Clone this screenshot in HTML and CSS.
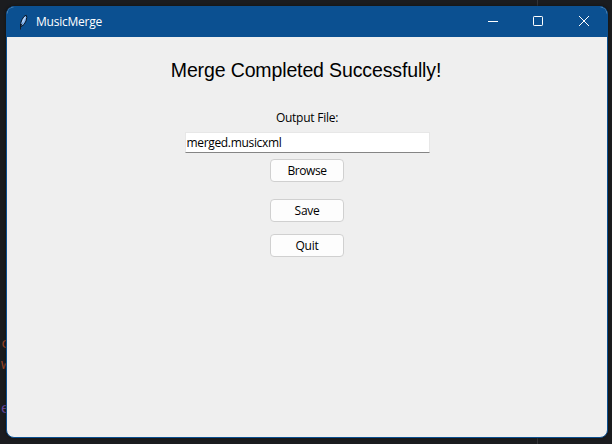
FILE: index.html
```html
<!DOCTYPE html>
<html lang="en">
<head>
<meta charset="utf-8">
<title>MusicMerge</title>
<link rel="stylesheet" href="styles.css">
</head>
<body>
<div class="desktop">
  <div class="guide"></div>
  <div class="code code-c">c</div>
  <div class="code code-w">w</div>
  <div class="code code-e">e</div>
  <main class="window">
    <header class="titlebar">
      <svg class="feather" width="12" height="16" viewBox="0 0 12 16">
        <path d="M2.5 13V9.5L4 5.5 6 2.5 8.2 1.2 8.8 3.3 8 7 6 10.5 4 12Z" fill="#86b6ef" stroke="#081524" stroke-width="1"/>
        <path d="M2.5 15.5V13L4 9.5" fill="none" stroke="#101c2c"/>
        <path d="M4.5 8 7 3" fill="none" stroke="#d5e8ff" stroke-width=".8"/>
      </svg>
      <span class="title">MusicMerge</span>
      <div class="controls">
        <svg width="46" height="30" viewBox="0 0 46 30"><path d="M17 14.5H27"/></svg>
        <svg width="46" height="30" viewBox="0 0 46 30"><rect x="16.5" y="9.5" width="9" height="9" rx=".7"/></svg>
        <svg width="46" height="30" viewBox="0 0 46 30"><path d="M16 9 26 19M26 9 16 19"/></svg>
      </div>
    </header>
    <section class="content">
      <h1><span>Merge Completed Successfully!</span></h1>
      <label for="output">Output File:</label>
      <input id="output" type="text" value="merged.musicxml">
      <button class="browse">Browse</button>
      <button class="save">Save</button>
      <button class="quit">Quit</button>
    </section>
  </main>
</div>
</body>
</html>
```
FILE: styles.css
```css
* { box-sizing: border-box; }
body { margin: 0; overflow: hidden; font-family: "Open Sans", "Noto Sans", sans-serif; font-size: 12px; }
.desktop { position: relative; width: 612px; height: 444px; padding: 6px 4px 6px 6px; background: #1b1c1f; }
.guide { position: absolute; left: 537px; top: 0; width: 1px; height: 444px; background: #333438; }
.code { position: absolute; left: 1px; font: 14px/18px "DejaVu Sans Mono", monospace; }
.code-c { top: 334px; color: #9a4528; }
.code-w { top: 355px; color: #9a4528; }
.code-e { top: 399px; color: #6a4a9a; }
.window { position: relative; display: flex; flex-direction: column; width: 602px; height: 432px; overflow: hidden; border: 1px solid #0b5091; border-radius: 8px; background: #efefef; box-shadow: 0 0 3px #101113; }
.titlebar { display: flex; flex: none; height: 30px; padding-left: 11px; align-items: center; background: #0b5091; color: #fff; }
.feather { margin-top: -1px; }
.title { margin-left: 6px; line-height: 16px; letter-spacing: -.23px; }
.controls { display: flex; margin: 0 -2px 0 auto; }
.controls svg { fill: none; stroke: #fff; stroke-width: 1; }
.content { display: flex; flex-direction: column; align-items: center; color: #000; }
h1 { margin: 21px 0 0; padding-right: 2px; font: 400 19.5px/24px "Liberation Sans", Arial, sans-serif; letter-spacing: -.13px; white-space: nowrap; }
label { margin-top: 28px; line-height: 16px; letter-spacing: -.25px; }
input { width: 245px; height: 21px; margin-top: 6px; padding: 0 1px; border: 1px solid #e7e7e7; border-bottom-color: #858585; border-radius: 0; outline: 0; background: #fff; color: #000; font: inherit; letter-spacing: -.33px; }
button { width: 74px; height: 23px; padding: 0; border: 1px solid #d0d0d0; border-radius: 4px; background: #fdfdfd; color: #000; font: inherit; line-height: 20px; }
.browse { margin-top: 6px; letter-spacing: -.4px; }
.save { margin-top: 17px; letter-spacing: -.3px; }
.quit { margin-top: 12px; letter-spacing: -.2px; }
```
